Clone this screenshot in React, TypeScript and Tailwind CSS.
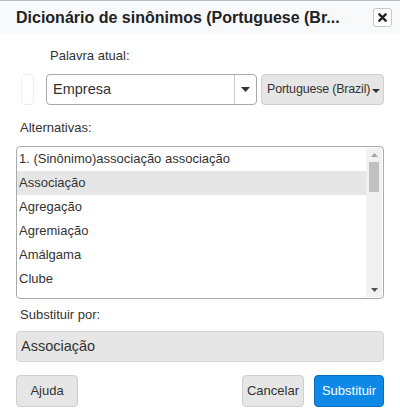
import React from "react";

const alternatives = [
  "1. (Sinônimo)associação associação",
  "Associação",
  "Agregação",
  "Agremiação",
  "Amálgama",
  "Clube",
];

const Caret = () => (
  <svg width="9" height="5" viewBox="0 0 9 5" className="inline-block">
    <path d="M0 0h9L4.5 5z" fill="#333" />
  </svg>
);

export default function App() {
  const selected = 1;
  return (
    <div className="w-[400px] h-[420px] bg-white border-t border-[#bdbdbd] text-[#333] font-['Liberation_Sans',Arial,sans-serif] overflow-hidden">
      {/* Header */}
      <div className="h-[33px] bg-[#f8f9fb] flex items-center justify-between pl-4 pr-2">
        <div className="text-[16px] font-bold text-[#222] leading-none">Dicionário de sinônimos (Portuguese (Br...</div>
        <button className="w-[19px] h-[19px] border border-[#c8c8c8] rounded-[3px] bg-white flex items-center justify-center">
          <svg width="9" height="9" viewBox="0 0 10 10">
            <path d="M1.5 1.5l7 7M8.5 1.5l-7 7" stroke="#222" strokeWidth="2.6" strokeLinecap="round" />
          </svg>
        </button>
      </div>

      <div className="px-4">
        <div className="pl-[34px] pt-[14px] text-[13px] leading-4">Palavra atual:</div>

        <div className="flex mt-[10px] h-[31px]">
          <div className="w-[13px] ml-[5px] border border-[#eee] rounded-[4px]" />
          <div className="ml-[12px] w-[211px] flex border border-[#a9a9a9] rounded-[4px] bg-white">
            <div className="flex-1 flex items-center pl-[6px] text-[14.5px]">Empresa</div>
            <div className="w-[22px] border-l border-[#ccc] flex items-center justify-center">
              <Caret />
            </div>
          </div>
          <button className="ml-[4px] flex-1 flex items-center gap-[2px] pl-[5px] bg-[#e6e6e6] border border-[#cfcfcf] rounded-[4px] text-[12.5px] tracking-[-0.2px] whitespace-nowrap">
            Portuguese (Brazil)
            <svg width="8" height="4" viewBox="0 0 8 4" className="mt-[2px]">
              <path d="M0 0h8L4 4z" fill="#333" />
            </svg>
          </button>
        </div>

        <div className="pl-[4px] pt-[15px] text-[13px] leading-4">Alternativas:</div>

        <div className="mt-[10px] h-[153px] border border-[#aaa] rounded-[4px] flex overflow-hidden">
          <div className="flex-1">
            {alternatives.map((a, i) => (
              <div
                key={a}
                className={`h-[24px] flex items-center pl-[2px] text-[13px] ${i === selected ? "bg-[#e6e6e6]" : ""}`}
              >
                {a}
              </div>
            ))}
          </div>
          <div className="w-[16px] bg-[#f1f1f1] flex flex-col items-center mt-[1px] mb-[1px] mr-[1px]">
            <svg width="7" height="4" viewBox="0 0 7 4" className="mt-[5px]">
              <path d="M0 4h7L3.5 0z" fill="#a3a3a3" />
            </svg>
            <div className="w-[10px] h-[30px] bg-[#c1c1c1] mt-[5px]" />
            <div className="flex-1" />
            <svg width="7" height="4" viewBox="0 0 7 4" className="mb-[5px]">
              <path d="M0 0h7L3.5 4z" fill="#505050" />
            </svg>
          </div>
        </div>

        <div className="pl-[4px] pt-[8px] text-[13px] leading-4">Substituir por:</div>

        <div className="mt-[8px] h-[31px] bg-[#e6e6e6] border border-[#d4d4d4] rounded-[4px] flex items-center pl-[4px] text-[14.5px]">
          Associação
        </div>

        <div className="flex mt-[13px] h-[32px] text-[13px]">
          <button className="w-[62px] bg-[#e6e6e6] border border-[#cfcfcf] rounded-[4px]">Ajuda</button>
          <div className="flex-1" />
          <button className="w-[62px] bg-[#e6e6e6] border border-[#cfcfcf] rounded-[4px]">Cancelar</button>
          <button className="ml-[10px] w-[70px] bg-[#0e88e6] border border-[#0a6cbd] rounded-[4px] text-white">Substituir</button>
        </div>
      </div>
    </div>
  );
}
